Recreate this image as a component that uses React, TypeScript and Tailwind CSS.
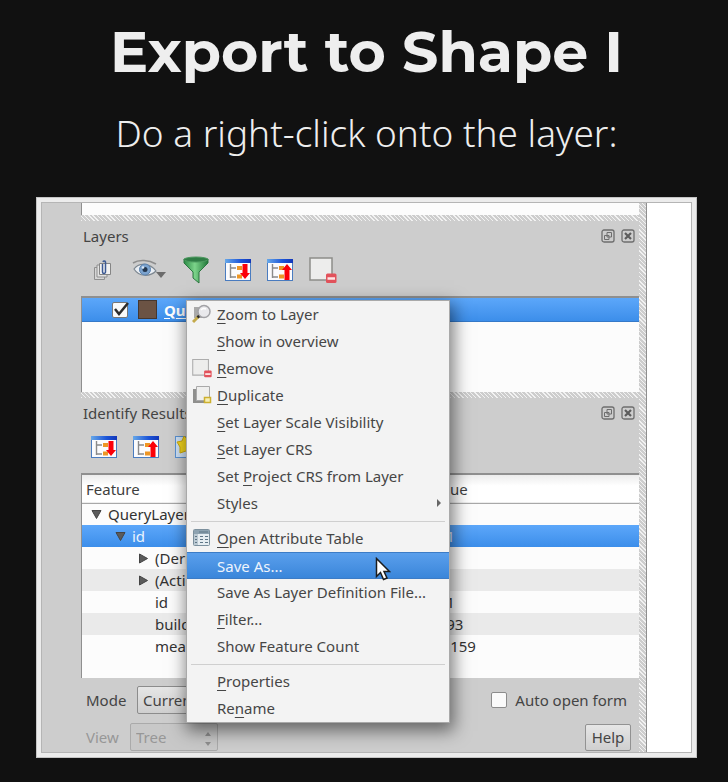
import React from "react";

function Stack() {
  return (
    <svg width="26" height="26" viewBox="0 0 26 26" fill="none">
      <path d="M4.500 10.500h10v12h-10z" fill="#d6d6d6" stroke="#8f8f8f" />
      <path d="M7 8h10v12H7z" fill="#e2e2e2" stroke="#8f8f8f" />
      <path d="M9.500 6.500h11v11h-11z" fill="#f1f1f1" stroke="#858585" />
      <path d="M12.500 7v8a1.500 1.500 0 0 0 3 0V5a1.300 1.300 0 0 0-2.500 0" stroke="#3c5a94" strokeWidth="1.500" />
    </svg>
  );
}

function Eye() {
  return (
    <svg width="35" height="26" viewBox="0 0 35 26" fill="none">
      <path d="M2 12C7 5 18 6 24 14 18 20 7 20 2 12z" fill="#e9eef4" stroke="#7d8790" strokeWidth="1.200" />
      <circle cx="13" cy="12.500" r="5.500" fill="#7ba3cf" stroke="#5c82ad" />
      <circle cx="13" cy="12.500" r="2.500" fill="#23364d" />
      <circle cx="11" cy="10.500" r="1.300" fill="#dceafa" />
      <path d="M1 6C7 2 17 3 24 7" stroke="#8d8d8d" strokeWidth="1.600" />
      <path d="M24 15h10l-5 6z" fill="#6b6b6b" />
    </svg>
  );
}

function Funnel() {
  return (
    <svg width="26" height="28" viewBox="0 0 26 28" fill="none">
      <defs>
        <linearGradient id="green" x1="0" x2="1">
          <stop offset="0" stopColor="#2b8a45" />
          <stop offset=".45" stopColor="#7cd48a" />
          <stop offset="1" stopColor="#1f7638" />
        </linearGradient>
      </defs>
      <path d="M1 3v4l9 9v6l6 5V16l9-9V3z" fill="url(#green)" stroke="#2c7741" />
      <ellipse cx="13" cy="3.500" rx="12" ry="2.500" fill="#2f7d45" stroke="#4c9a5f" />
    </svg>
  );
}

function Tree({ up = false }: { up?: boolean }) {
  return (
    <svg width="26" height="24" viewBox="0 0 26 24" fill="none">
      <defs>
        <linearGradient id="titlebar" x1="0" x2="1">
          <stop offset="0" stopColor="#67a8e8" />
          <stop offset=".6" stopColor="#1c55d8" />
          <stop offset="1" stopColor="#1236b8" />
        </linearGradient>
      </defs>
      <rect x=".5" y="1.500" width="25" height="21" fill="#fbfbfd" stroke="#4a7cc0" />
      <rect x="0" y="1" width="26" height="4" fill="url(#titlebar)" />
      <path d="M5.500 6v14M5 10h6M5 19h6" stroke="#8a8a8a" strokeWidth="1.400" />
      <path d="M12 8h5v4h-5zM12 16.500h5v4h-5z" fill="#ee9624" />
      {up ? (
        <path d="M20 6l5 6h-2.500v10h-5V12H15z" fill="#fb0009" />
      ) : (
        <path d="M20 21l5-6h-2.500V6h-5v9H15z" fill="#fb0009" />
      )}
    </svg>
  );
}

function RemoveBox({ small = false }: { small?: boolean }) {
  return (
    <svg width={small ? 20 : 28} height={small ? 20 : 28} viewBox="0 0 28 28" fill="none">
      <path d="M1 2h22v22H1z" fill="#ededec" stroke={small ? "#adadad" : "#8d8d89"} strokeWidth="1.500" />
      <rect x="17" y="17.500" width="10.500" height="9.500" rx="1.500" fill="#e2525b" />
      <path d="M18.500 22.500h7.500" stroke="#ffe4e4" strokeWidth="2.500" />
    </svg>
  );
}

function Star() {
  return (
    <svg width="26" height="24" viewBox="0 0 26 24" fill="none">
      <rect x=".5" y="1.500" width="25" height="21" fill="#cfe2f6" stroke="#5b92d2" />
      <path d="M9 1l4 4 6 1-3 6 1 7-6-3-6 2v-6L2 7l5-1z" fill="#f5d81d" stroke="#cfa90e" />
    </svg>
  );
}

function Magnifier() {
  return (
    <svg width="20" height="20" viewBox="0 0 20 20" fill="none">
      <path d="M2 3h10v11H2z" fill="#a9a9a9" />
      <path d="M7 12l-6 6" stroke="#c4aa4b" strokeWidth="3" />
      <path d="M7.500 11.500l-2 2" stroke="#2d2d2d" strokeWidth="2.500" />
      <circle cx="12" cy="7.500" r="6" fill="#e9e9ec" stroke="#a2a2a6" strokeWidth="1.500" />
      <path d="M9 6a4 4 0 0 1 5-1" stroke="#fff" strokeWidth="1.500" />
    </svg>
  );
}

function Duplicate() {
  return (
    <svg width="20" height="20" viewBox="0 0 20 20" fill="none">
      <path d="M1 4h12v14H1z" fill="#8f8f8d" />
      <path d="M4.500 1.500h13v14h-13z" fill="#efefee" stroke="#a9a9a9" />
      <rect x="12.500" y="12.500" width="6" height="5" fill="#f7efb5" stroke="#cdb02f" strokeWidth="1.500" />
    </svg>
  );
}

function TableIcon() {
  return (
    <svg width="20" height="20" viewBox="0 0 20 20" fill="none">
      <rect x="1.500" y="1.500" width="16" height="16" rx="1" fill="#e6edf1" stroke="#7c909d" />
      <path d="M2 2h15v4H2z" fill="#8ea3b1" />
      <path d="M2 6h4v11H2z" fill="#bccad3" />
      <path d="M3 8.500h2M3 11.500h2M3 14.500h2M8 8.500h3M8 11.500h3M8 14.500h3M13 8.500h3M13 11.500h3M13 14.500h3M7 4h9" stroke="#5f7686" />
    </svg>
  );
}

function FloatIcon() {
  return (
    <svg width="14" height="14" viewBox="0 0 14 14" fill="none" stroke="#6e6e6e">
      <rect x="1" y="1" width="12" height="12" rx="2" strokeWidth="1.300" />
      <path d="M6 3.500h4.500V8H6zM3.500 6.500H8v4H3.500z" fill="#cdcdcd" />
    </svg>
  );
}

function CloseIcon() {
  return (
    <svg width="14" height="14" viewBox="0 0 14 14" fill="none" stroke="#6e6e6e">
      <rect x="1" y="1" width="12" height="12" rx="2" strokeWidth="1.300" />
      <path d="M4 4l6 6M10 4l-6 6" stroke="#5c5c5c" strokeWidth="2.200" />
    </svg>
  );
}

function DockTitle({ title }: { title: string }) {
  return (
    <header className="flex h-[30px] items-center gap-1.5 pr-1 pl-0.5">
      <h2 className="flex-1">{title}</h2>
      <button aria-label={`Float ${title}`}><FloatIcon /></button>
      <button aria-label={`Close ${title}`}><CloseIcon /></button>
    </header>
  );
}

function Handle() {
  return (
    <div className="h-1.5 bg-[repeating-linear-gradient(45deg,#f2f2f2_0_1px,#cdcdcd_1px_3px)]" />
  );
}

function Tool({ label, children }: { label: string; children: React.ReactNode }) {
  return <button aria-label={label}>{children}</button>;
}

type Item = { label: string; key?: number; icon?: React.ReactNode; active?: boolean; sub?: boolean };

const groups: Item[][] = [
  [
    { label: "Zoom to Layer", key: 0, icon: <Magnifier /> },
    { label: "Show in overview", key: 0 },
    { label: "Remove", key: 0, icon: <RemoveBox small /> },
    { label: "Duplicate", key: 0, icon: <Duplicate /> },
    { label: "Set Layer Scale Visibility", key: 0 },
    { label: "Set Layer CRS", key: 0 },
    { label: "Set Project CRS from Layer", key: 4 },
    { label: "Styles", sub: true },
  ],
  [
    { label: "Open Attribute Table", key: 0, icon: <TableIcon /> },
    { label: "Save As...", active: true },
    { label: "Save As Layer Definition File..." },
    { label: "Filter...", key: 0 },
    { label: "Show Feature Count" },
  ],
  [
    { label: "Properties", key: 0 },
    { label: "Rename", key: 2 },
  ],
];

function MenuLabel({ label, at }: { label: string; at?: number }) {
  if (at === undefined) return <span>{label}</span>;
  return (
    <span>
      {label.slice(0, at)}
      <span className="underline decoration-1 underline-offset-3">{label[at]}</span>
      {label.slice(at + 1)}
    </span>
  );
}

function MenuItem({ item }: { item: Item }) {
  return (
    <button
      role="menuitem"
      className={
        item.active
          ? "relative flex h-[27px] w-full items-center border-y border-[#3c7cc6] bg-linear-to-b from-[#5a9fec] to-[#3a86da] text-left leading-5 text-[#eef4fc]"
          : "flex h-[27px] w-full items-center pb-px text-left leading-5"
      }
    >
      <span className="w-[30px] pl-[5px]">{item.icon}</span>
      <span className="flex-1"><MenuLabel label={item.label} at={item.key} /></span>
      {item.sub && (
        <svg width="4" height="8" viewBox="0 0 4 8" className="mr-2"><path d="M0 0l4 4-4 4z" fill="#666" /></svg>
      )}
      {item.active && (
        <svg width="16" height="25" viewBox="0 0 16 25" className="absolute top-1 left-[188px]">
          <path d="M1.500 1.500v18l4-4 3 7 3.500-1.500-3-6.500h5.500z" fill="#fff" stroke="#1c1c1c" strokeWidth="1.500" />
        </svg>
      )}
    </button>
  );
}

function ContextMenu() {
  return (
    <div role="menu" className="absolute top-[98px] left-[145px] w-[262px] bg-[#f3f3f3] text-[#464646] shadow-[0_0_0_1px_#a9a9a9,2px_6px_16px_3px_rgba(0,0,0,0.5)]">
      {groups.map((g, i) => (
        <div key={i}>
          {i > 0 && <div className="mx-1 flex h-2 items-center"><hr className="w-full border-[#cfcfcf]" /></div>}
          {g.map((it) => <MenuItem key={it.label} item={it} />)}
        </div>
      ))}
    </div>
  );
}

const rows = [
  { name: "QueryLayer", value: "", pad: "pl-[9px]", arrow: "open" },
  { name: "id", value: "561", pad: "pl-[33px]", arrow: "open", selected: true },
  { name: "(Derived)", value: "", pad: "pl-14", arrow: "closed" },
  { name: "(Actions)", value: "", pad: "pl-14", arrow: "closed" },
  { name: "id", value: "561", pad: "pl-[73px]" },
  { name: "building", value: "5493", pad: "pl-[73px]" },
  { name: "measure", value: "37.159", pad: "pl-[73px]" },
];

function Arrow({ kind }: { kind: string }) {
  return (
    <button aria-label="Toggle" className="mr-1.5">
      <svg width="11" height="11" viewBox="0 0 11 11">
        <path d={kind === "open" ? "M1 1.500h9L5.500 9.500z" : "M1.500 1l8 4.500-8 4.500z"} fill="#5b5b5b" stroke="#444" />
      </svg>
    </button>
  );
}

function Results() {
  return (
    <div className="h-[205px] border-t-2 border-l border-[#8f8f8f] bg-[#fcfcfc] leading-5 text-[#333]">
      <table className="w-full table-fixed border-collapse">
        <thead>
          <tr className="h-7 border-b border-[#a8a8a8] bg-linear-to-b from-[#ececec] to-white to-40% text-[#3f3f3f]">
            <th className="w-[347px] p-0 pl-1 text-left font-normal">Feature</th>
            <th className="p-0 text-left font-normal">Value</th>
          </tr>
        </thead>
        <tbody>
          {rows.map((r, i) => (
            <tr
              key={i}
              className={
                r.selected
                  ? "h-[22px] bg-linear-to-b from-[#5ca7fa] to-[#3c8eea] text-[#eaf3fd]"
                  : i % 2 === 1
                    ? "h-[22px] bg-[#eaeaea]"
                    : "h-[22px]"
              }
            >
              <td className="p-0">
                <div className={`flex items-center ${r.pad}`}>
                  {r.arrow && <Arrow kind={r.arrow} />}
                  {r.name}
                </div>
              </td>
              <td className="p-0">{r.value}</td>
            </tr>
          ))}
        </tbody>
      </table>
    </div>
  );
}

export default function App() {
  return (
    <main className="min-h-screen bg-[#111] pt-[17px] pr-[31px] pb-6 pl-9 font-['Noto_Sans','Open_Sans',sans-serif]">
      <h1 className="text-center font-['Montserrat','Inter',sans-serif] text-[57px] leading-[70px] font-bold whitespace-nowrap text-[#eee]">
        Export to Shape I
      </h1>
      <p className="mt-[22px] text-center text-[37px] leading-[48px] font-light whitespace-nowrap text-[#eee]">
        Do a right-click onto the layer:
      </p>

      <section className="mt-10 border border-[#c4c4c4] bg-[#ececec] p-1">
        <div className="relative flex overflow-hidden border border-[#b5b5b5] bg-white text-[15px] leading-[22px] text-[#444]">
          <div className="min-w-0 flex-1 bg-[#cdcdcd] pl-[39px]">
            <div className="h-3 border-l border-[#8f8f8f] bg-[#fcfcfc]" />
            <Handle />
            <DockTitle title="Layers" />
            <div className="flex h-[45px] items-center gap-4 pb-2 pl-[9px]">
              <Tool label="Add group"><Stack /></Tool>
              <Tool label="Manage visibility"><Eye /></Tool>
              <Tool label="Filter legend"><Funnel /></Tool>
              <Tool label="Expand all"><Tree /></Tool>
              <Tool label="Collapse all"><Tree up /></Tool>
              <Tool label="Remove layer"><RemoveBox /></Tool>
            </div>
            <div className="h-24 border-t-2 border-l border-[#8f8f8f] bg-[#fcfcfc]">
              <label className="flex h-6 items-center border-b border-[#3579c8] bg-linear-to-b from-[#5ca7fa] to-[#3c8eea] pl-[30px] font-bold text-white">
                <span className="relative mr-2.5 size-4">
                  <input type="checkbox" defaultChecked className="block size-4 appearance-none rounded-xs border border-[#777] bg-[#fafafa]" />
                  <svg width="18" height="16" viewBox="0 0 18 16" className="absolute top-0 left-0" fill="none">
                    <path d="M3 7l4 5 9-11" stroke="#2d2d2d" strokeWidth="2.500" />
                  </svg>
                </span>
                <span className="mr-[7px] size-[19px] border border-[#45372f] bg-[#6b5344]" />
                <span className="underline underline-offset-2">QueryLayer</span>
              </label>
            </div>
            <Handle />
            <DockTitle title="Identify Results" />
            <div className="flex h-[45px] items-center gap-4 pb-2 pl-2.5">
              <Tool label="Expand tree"><Tree /></Tool>
              <Tool label="Collapse tree"><Tree up /></Tool>
              <Tool label="Expand new results"><Star /></Tool>
            </div>
            <Results />
            <div className="flex h-[44px] items-center pr-3 pl-[5px]">
              <label htmlFor="mode" className="w-[51px]">Mode</label>
              <select id="mode" className="h-7 w-[130px] appearance-none rounded-xs border border-[#8c8c8c] bg-linear-to-b from-[#e6e6e6] to-[#cfcfcf] pl-[5px]">
                <option>Current Layer</option>
              </select>
              <label className="ml-auto flex items-center gap-2">
                <input type="checkbox" className="size-4 appearance-none rounded-xs border border-[#8c8c8c] bg-[#fafafa]" />
                Auto open form
              </label>
            </div>
            <div className="flex h-[30px] items-center pr-2 pl-[5px] text-[#979797]">
              <label htmlFor="view" className="w-[44px]">View</label>
              <span className="relative">
                <select id="view" disabled className="block h-7 w-[88px] appearance-none rounded-xs border border-[#aaa] bg-[#c8c8c8] pl-[5px]">
                  <option>Tree</option>
                </select>
                <svg width="8" height="16" viewBox="0 0 8 16" className="absolute top-2 right-1.5">
                  <path d="M1 5l3-4 3 4zM1 11l3 4 3-4z" fill="#8f8f8f" />
                </svg>
              </span>
              <button className="ml-auto h-[27px] w-[46px] rounded-xs border border-[#929292] bg-linear-to-b from-[#e6e6e6] to-[#cfcfcf] text-[#444]">
                Help
              </button>
            </div>
          </div>
          <div className="w-2 border-r border-[#8f8f8f] bg-[repeating-linear-gradient(45deg,#f2f2f2_0_1px,#cdcdcd_1px_3px)]" />
          <div className="w-11" />
          <ContextMenu />
        </div>
      </section>
    </main>
  );
}
